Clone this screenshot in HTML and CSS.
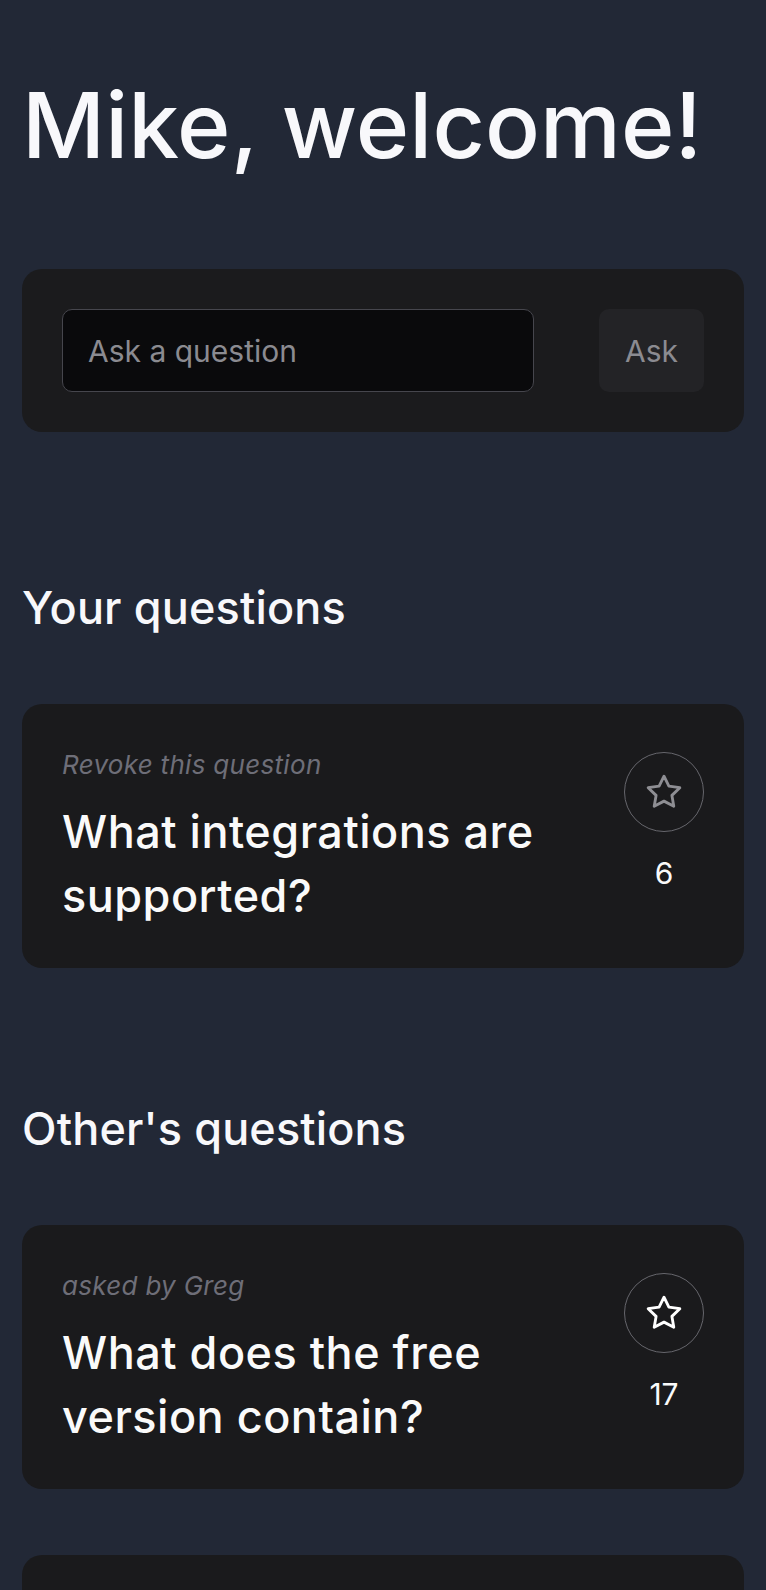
FILE: index.html
```html
<!DOCTYPE html>
<html lang="en">
<head>
<meta charset="utf-8">
<title>Questions</title>
<link rel="stylesheet" href="styles.css">
</head>
<body>
<main class="page">
  <h1 class="title">Mike, welcome!</h1>

  <form class="ask-card">
    <input class="ask-input" type="text" placeholder="Ask a question">
    <button class="ask-btn" type="button">Ask</button>
  </form>

  <section class="section">
    <h2 class="section-title">Your questions</h2>
    <div class="card-list">
      <article class="q-card">
        <div class="q-body">
          <div class="q-meta">Revoke this question</div>
          <div class="q-title">What integrations are supported?</div>
        </div>
        <div class="vote">
          <button class="star-btn muted" type="button">
            <svg viewBox="0 0 24 24" width="38" height="38" fill="none" stroke="currentColor" stroke-width="1.8" stroke-linejoin="round" stroke-linecap="round"><polygon points="12 2 15.09 8.26 22 9.27 17 14.14 18.18 21.02 12 17.77 5.82 21.02 7 14.14 2 9.27 8.91 8.26 12 2"/></svg>
          </button>
          <div class="count">6</div>
        </div>
      </article>
    </div>
  </section>

  <section class="section">
    <h2 class="section-title">Other's questions</h2>
    <div class="card-list">
      <article class="q-card">
        <div class="q-body">
          <div class="q-meta">asked by Greg</div>
          <div class="q-title">What does the free version contain?</div>
        </div>
        <div class="vote">
          <button class="star-btn" type="button">
            <svg viewBox="0 0 24 24" width="38" height="38" fill="none" stroke="currentColor" stroke-width="1.8" stroke-linejoin="round" stroke-linecap="round"><polygon points="12 2 15.09 8.26 22 9.27 17 14.14 18.18 21.02 12 17.77 5.82 21.02 7 14.14 2 9.27 8.91 8.26 12 2"/></svg>
          </button>
          <div class="count">17</div>
        </div>
      </article>
      <article class="q-card q-card-placeholder" aria-hidden="true"></article>
    </div>
  </section>
</main>
</body>
</html>
```

FILE: styles.css
```css
* {
  box-sizing: border-box;
}

html, body {
  margin: 0;
  background: #222836;
}

body {
  font-family: Inter, "Noto Sans", "Liberation Sans", sans-serif;
  color: #fafafa;
}

.page {
  padding: 71px 22px 60px;
}

.title {
  margin: 0 0 89px;
  font-size: 91px;
  line-height: 109px;
  font-weight: 500;
  letter-spacing: 0.1px;
  color: #f8f8fb;
}

.ask-card {
  display: flex;
  align-items: center;
  gap: 65px;
  margin: 0;
  padding: 40px;
  border-radius: 20px;
  background: #1b1b1d;
}

.ask-input {
  flex: 1;
  min-width: 0;
  height: 83px;
  padding: 0 25px;
  border: 1.5px solid #46464d;
  border-radius: 10px;
  background: #0a0a0c;
  color: #e4e4e7;
  font-family: inherit;
  font-size: 30px;
  outline: none;
}

.ask-input::placeholder {
  color: #8b8b91;
}

.ask-btn {
  width: 105px;
  height: 83px;
  border: none;
  border-radius: 10px;
  background: #232326;
  color: #8b8b91;
  font-family: inherit;
  font-size: 30px;
  padding: 0;
}

.section {
  margin-top: 149px;
}

.section + .section {
  margin-top: 134px;
}

.section-title {
  margin: 0 0 69px;
  font-size: 45px;
  line-height: 54px;
  font-weight: 500;
  letter-spacing: 0.15px;
  color: #f8f8fb;
}

.card-list {
  display: flex;
  flex-direction: column;
  gap: 66px;
}

.q-card {
  display: flex;
  align-items: flex-start;
  gap: 40px;
  padding: 40px;
  border-radius: 20px;
  background: #1a1a1c;
}

.q-card-placeholder {
  min-height: 264px;
}

.q-body {
  flex: 1;
  min-width: 0;
}

.q-meta {
  font-size: 26px;
  line-height: 41px;
  font-style: italic;
  letter-spacing: 0.3px;
  color: #6e6e78;
}

.q-title {
  margin-top: 15px;
  font-size: 45px;
  line-height: 64px;
  font-weight: 500;
  letter-spacing: 0.5px;
  color: #fafafa;
}

.vote {
  width: 80px;
  margin-top: 8px;
  display: flex;
  flex-direction: column;
  align-items: center;
  gap: 19px;
}

.star-btn {
  width: 80px;
  height: 80px;
  padding: 0;
  border: 1.5px solid #66666c;
  border-radius: 50%;
  background: transparent;
  color: #ffffff;
  display: flex;
  align-items: center;
  justify-content: center;
}

.star-btn.muted {
  color: #8e8e93;
}

.count {
  font-size: 30px;
  line-height: 45px;
  font-weight: 400;
  color: #fafafa;
}
```
